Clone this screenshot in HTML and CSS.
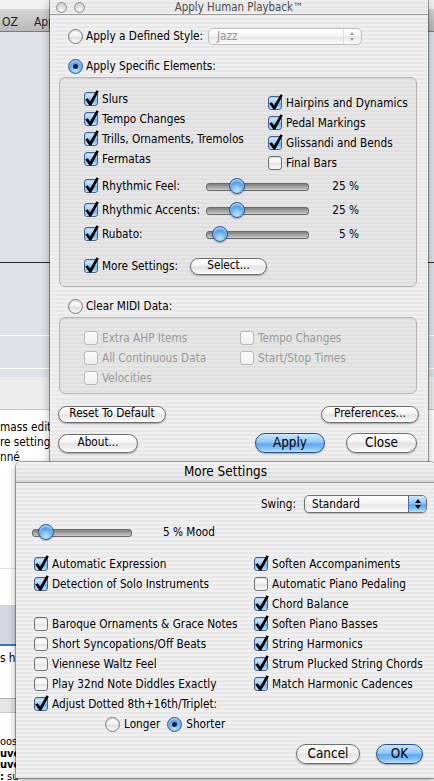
FILE: index.html
```html
<!DOCTYPE html>
<html lang="en">
<head>
<meta charset="utf-8">
<title>Apply Human Playback</title>
<link rel="stylesheet" href="styles.css">
</head>
<body>
<div class="desk">

  <!-- document window sitting behind the dialogs -->
  <div class="backwin">
    <div class="bw-cap"></div>
    <div class="bw-toolbar"><span class="tool-a">OZ</span><span>Apply</span></div>
    <div class="bw-pane p1"></div>
    <div class="bw-rule"></div>
    <div class="bw-pane p2"></div>
    <div class="bw-pane p3"></div>
    <div class="bw-pane p4"></div>
    <div class="bw-strip s1"></div>
    <div class="bw-doc d1">
      <p>mass editing</p>
      <p>re settings</p>
      <p>nné</p>
    </div>
    <div class="bw-doc d2"></div>
    <div class="bw-pane p5"></div>
    <div class="bw-doc d3"><p>s h</p></div>
    <div class="bw-strip s2"></div>
    <div class="bw-doc d4">
      <p>oost</p>
      <p><b>uve</b></p>
      <p><b>uve</b></p>
      <p><b>:</b> su</p>
    </div>
  </div>

  <!-- Apply Human Playback utility panel -->
  <section class="win hp">
    <header class="tb-util">
      <span class="lights"><i></i><i></i></span>
      <h1>Apply Human Playback™</h1>
      <span></span>
    </header>
    <div class="hp-body">
      <div class="line style-row">
        <label class="opt"><span class="rb"></span>Apply a Defined Style:</label>
        <div class="popup jazz"><span class="pop-text">Jazz</span><span class="pop-arrows"></span></div>
      </div>
      <div class="line radio-line mt10">
        <label class="opt"><span class="rb on"></span>Apply Specific Elements:</label>
      </div>

      <div class="group g-elems">
        <div class="cols">
          <div class="col">
            <div class="ck"><span class="cb on"></span>Slurs</div>
            <div class="ck"><span class="cb on"></span>Tempo Changes</div>
            <div class="ck"><span class="cb on"></span>Trills, Ornaments, Tremolos</div>
            <div class="ck"><span class="cb on"></span>Fermatas</div>
          </div>
          <div class="col col-r">
            <div class="ck"><span class="cb on"></span>Hairpins and Dynamics</div>
            <div class="ck"><span class="cb on"></span>Pedal Markings</div>
            <div class="ck"><span class="cb on"></span>Glissandi and Bends</div>
            <div class="ck"><span class="cb"></span>Final Bars</div>
          </div>
        </div>
        <div class="sliders">
          <div class="sl-row">
            <div class="ck"><span class="cb on"></span>Rhythmic Feel:</div>
            <div class="slider"><span class="knob" style="left:23px"></span></div>
            <div class="val">25 %</div>
          </div>
          <div class="sl-row">
            <div class="ck"><span class="cb on"></span>Rhythmic Accents:</div>
            <div class="slider"><span class="knob" style="left:23px"></span></div>
            <div class="val">25 %</div>
          </div>
          <div class="sl-row">
            <div class="ck"><span class="cb on"></span>Rubato:</div>
            <div class="slider"><span class="knob" style="left:6px"></span></div>
            <div class="val">5 %</div>
          </div>
        </div>
        <div class="more-row">
          <div class="ck"><span class="cb on"></span>More Settings:</div>
          <button class="btn w-select">Select...</button>
        </div>
      </div>

      <div class="line radio-line mt9">
        <label class="opt"><span class="rb"></span>Clear MIDI Data:</label>
      </div>

      <div class="group g-clear">
        <div class="clear-cols">
          <div class="col">
            <div class="ck dis"><span class="cb"></span>Extra AHP Items</div>
            <div class="ck dis"><span class="cb"></span>All Continuous Data</div>
            <div class="ck dis"><span class="cb"></span>Velocities</div>
          </div>
          <div class="col">
            <div class="ck dis"><span class="cb"></span>Tempo Changes</div>
            <div class="ck dis"><span class="cb"></span>Start/Stop Times</div>
          </div>
        </div>
      </div>

      <div class="btn-row r1">
        <button class="btn w-reset">Reset To Default</button>
        <button class="btn w-prefs">Preferences...</button>
      </div>
      <div class="btn-row r2">
        <button class="btn tall w-about">About...</button>
        <button class="btn big default w-apply">Apply</button>
        <button class="btn big w-close">Close</button>
      </div>
    </div>
  </section>

  <!-- More Settings dialog -->
  <section class="win ms">
    <header class="tb-main"><h1>More Settings</h1></header>
    <div class="ms-body">
      <div class="swing-row">
        <span>Swing:</span>
        <div class="popup swing"><span class="pop-text">Standard</span><span class="pop-arrows blue"></span></div>
      </div>
      <div class="mood-row">
        <div class="slider mood"><span class="knob" style="left:6px"></span></div>
        <span>5 % Mood</span>
      </div>
      <div class="ms-cols">
        <div class="col">
          <div class="ck"><span class="cb on"></span>Automatic Expression</div>
          <div class="ck"><span class="cb on"></span>Detection of Solo Instruments</div>
          <div class="ck blank"></div>
          <div class="ck"><span class="cb"></span>Baroque Ornaments &amp; Grace Notes</div>
          <div class="ck"><span class="cb"></span>Short Syncopations/Off Beats</div>
          <div class="ck"><span class="cb"></span>Viennese Waltz Feel</div>
          <div class="ck"><span class="cb"></span>Play 32nd Note Diddles Exactly</div>
          <div class="ck"><span class="cb on"></span>Adjust Dotted 8th+16th/Triplet:</div>
          <div class="dot-row">
            <label class="opt"><span class="rb"></span>Longer</label>
            <label class="opt"><span class="rb on"></span>Shorter</label>
          </div>
        </div>
        <div class="col">
          <div class="ck"><span class="cb on"></span>Soften Accompaniments</div>
          <div class="ck"><span class="cb"></span>Automatic Piano Pedaling</div>
          <div class="ck"><span class="cb on"></span>Chord Balance</div>
          <div class="ck"><span class="cb on"></span>Soften Piano Basses</div>
          <div class="ck"><span class="cb on"></span>String Harmonics</div>
          <div class="ck"><span class="cb on"></span>Strum Plucked String Chords</div>
          <div class="ck"><span class="cb on"></span>Match Harmonic Cadences</div>
        </div>
      </div>
      <div class="ms-btns">
        <button class="btn big w-cancel">Cancel</button>
        <button class="btn big default w-ok">OK</button>
      </div>
    </div>
  </section>

</div>
</body>
</html>
```

FILE: styles.css
```css
* { box-sizing: border-box; }

html, body { margin: 0; padding: 0; }

body {
  width: 434px;
  height: 781px;
  overflow: hidden;
  font-family: "DejaVu Sans Condensed", "DejaVu Sans", sans-serif;
  font-stretch: condensed;
  font-size: 11.7px;
  line-height: 14px;
  color: #000;
  background: #fff;
}

p { margin: 0; }

.desk {
  position: relative;
  width: 434px;
  height: 781px;
  overflow: hidden;
}

/* ---------- background document window ---------- */
.backwin {
  display: flex;
  flex-direction: column;
  height: 781px;
}
.backwin > div { flex: none; }

.bw-cap { height: 9px; background: #f2f2f2; }
.bw-toolbar {
  height: 23px;
  padding-top: 3px;
  display: flex;
  align-items: center;
  gap: 16px;
  font-size: 12px;
  color: #1e1e1e;
  background: linear-gradient(#d6d6d6, #b8b8b8);
  border-bottom: 1px solid #7b7b7b;
}
.tool-a { margin-left: 2px; }

.bw-pane { background: #dde2e7; }
.p1 { height: 230px; }
.bw-rule { height: 1px; background: #2b2b2b; }
.p2 { height: 73px; border-bottom: 1px solid #fff; }
.p3 { height: 33px; border-bottom: 1px solid #fff; }
.p4 { height: 8px; }
.bw-strip { background: #ebebeb; }
.s1 { height: 33px; border-bottom: 1px solid #c4c4c4; }
.bw-doc { background: #fff; }
.d1 { height: 159px; padding-top: 10px; line-height: 15px; border-bottom: 1px solid #e2e2e2; }
.d2 { height: 36px; }
.p5 { height: 41px; background: #d3d9df; border-bottom: 2px solid #3f73c0; }
.d3 { height: 53px; padding-top: 5px; border-bottom: 1px solid #b1b1b1; }
.s2 { height: 14px; background: #e6e6e6; border-bottom: 1px solid #c8c8c8; }
.backwin > .d4 { flex: 1; padding-top: 23px; font-size: 11px; line-height: 11.5px; }

/* ---------- windows ---------- */
.win {
  position: absolute;
  background: repeating-linear-gradient(180deg, #efefef 0 2px, #e8e8e8 2px 4px);
  box-shadow: 0 0 0 1px rgba(0, 0, 0, .32), 0 3px 9px rgba(0, 0, 0, .35);
}

.hp { left: 50px; top: 0; width: 378px; height: 462px; }
.ms { left: 16px; top: 462px; width: 419px; height: 316px; border-radius: 5px 5px 0 0; }

/* small utility title bar */
.tb-util {
  height: 15px;
  display: grid;
  grid-template-columns: 1fr auto 1fr;
  align-items: center;
  border-bottom: 1px solid #9d9d9d;
  background: repeating-linear-gradient(180deg, #ededed 0 2px, #e5e5e5 2px 4px);
}
.tb-util h1 {
  margin: 0;
  font-size: 11.4px;
  font-weight: normal;
  line-height: 14px;
  color: #4b4b4b;
}
.lights { display: flex; gap: 7px; padding-left: 6px; }
.lights i {
  width: 11px;
  height: 11px;
  border-radius: 50%;
  border: 1px solid #8f8f8f;
  background: radial-gradient(circle at 50% 75%, #fafafa 0, #dedede 45%, #c4c4c4 100%);
}

/* regular title bar */
.tb-main {
  height: 21px;
  display: flex;
  align-items: center;
  justify-content: center;
  border-radius: 5px 5px 0 0;
  border-bottom: 1px solid #999;
  background:
    repeating-linear-gradient(180deg, rgba(255,255,255,.35) 0 2px, rgba(255,255,255,0) 2px 4px),
    linear-gradient(#ececec, #d8d8d8);
}
.tb-main h1 {
  margin: 0;
  font-size: 13.4px;
  font-weight: normal;
  line-height: 16px;
}

/* ---------- controls ---------- */
.line { display: flex; align-items: center; height: 20px; }
.mt10 { margin-top: 10px; }
.mt9 { margin-top: 9px; }

.opt { display: flex; align-items: center; gap: 3px; white-space: nowrap; }

.rb {
  position: relative;
  flex: none;
  width: 15px;
  height: 15px;
  border-radius: 50%;
  border: 1px solid #7c7c7c;
  background: linear-gradient(#ffffff 0%, #f1f1f1 45%, #dedede 55%, #f9f9f9 100%);
  box-shadow: inset 0 1px 1px rgba(0, 0, 0, .18);
}
.rb.on {
  border-color: #3c5a88;
  background: radial-gradient(circle at 50% 80%, #b9e4ff 0, #69b0f1 45%, #3f8ce3 70%, #8cc6f5 100%);
  box-shadow: inset 0 2px 2px rgba(255, 255, 255, .55);
}
.rb.on::after {
  content: "";
  position: absolute;
  left: 4px;
  top: 4px;
  width: 5px;
  height: 5px;
  border-radius: 50%;
  background: #13233a;
}

.ck {
  display: flex;
  align-items: center;
  gap: 4px;
  height: 20px;
  white-space: nowrap;
}
.ck.dis { color: #9a9a9a; }

.cb {
  position: relative;
  flex: none;
  width: 14px;
  height: 14px;
  border: 1px solid #727272;
  border-radius: 3px;
  background: linear-gradient(#ffffff 0%, #f3f3f3 45%, #e2e2e2 55%, #fbfbfb 100%);
  box-shadow: inset 0 1px 1px rgba(0, 0, 0, .15);
}
.ck.dis .cb {
  border-color: #b9b9b9;
  background: linear-gradient(#fbfbfb, #efefef);
  box-shadow: none;
}
.cb.on {
  border-color: #45628c;
  background: linear-gradient(#d3ecfe 0%, #a2d0f7 45%, #6db4f1 55%, #b4e2ff 100%);
}
/* the check glyph rises above the box */
.cb.on::after {
  content: "";
  position: absolute;
  left: -1px;
  top: -3px;
  width: 16px;
  height: 17px;
  background: #000;
  clip-path: polygon(1.4px 9.6px, 3.6px 8.3px, 6.1px 11.6px, 12.6px 0.3px, 14.8px 1.4px, 7.3px 15.4px, 5.4px 15.4px);
}

.slider { position: relative; height: 16px; }
.slider::before {
  content: "";
  position: absolute;
  left: 0;
  right: 0;
  top: 5px;
  height: 6px;
  border-radius: 3px;
  border: 1px solid #6c6c6c;
  background: linear-gradient(#7e7e7e, #c9c9c9);
}
.knob {
  position: absolute;
  top: 0;
  width: 16px;
  height: 16px;
  border-radius: 50%;
  border: 1px solid #33598f;
  background: radial-gradient(circle at 50% 80%, #c2e8ff 0, #74b8f3 40%, #3c8ae2 70%, #7fbff4 100%);
  box-shadow: inset 0 2px 2px rgba(255, 255, 255, .6), 0 1px 1px rgba(0, 0, 0, .25);
}

.btn {
  display: flex;
  align-items: center;
  justify-content: center;
  flex: none;
  padding: 0;
  height: 17px;
  font-family: inherit;
  font-stretch: condensed;
  font-size: 11.7px;
  line-height: 1;
  color: #000;
  border: 1px solid #6e6e6e;
  border-radius: 9px;
  background: linear-gradient(#ffffff 0%, #f5f5f5 40%, #e3e3e3 52%, #eeeeee 78%, #ffffff 100%);
  box-shadow: 0 1px 1.5px rgba(0, 0, 0, .3);
}
.btn.tall { height: 19px; border-radius: 10px; }
.btn.big { height: 20px; border-radius: 10px; font-size: 13.4px; }
.btn.default {
  border-color: #2b4e88;
  background: linear-gradient(#cde7fe 0%, #92c8f7 45%, #5ea7ef 55%, #80c1f8 80%, #b9e5ff 100%);
}

.w-select { width: 77px; }
.w-reset { width: 108px; }
.w-prefs { width: 98px; }
.w-about { width: 80px; }
.w-apply { width: 70px; }
.w-close { width: 71px; }
.w-cancel { width: 64px; }
.w-ok { width: 47px; }

.popup {
  display: flex;
  align-items: center;
  height: 18px;
  border: 1px solid #6f6f6f;
  border-radius: 5px;
  background: linear-gradient(#ffffff 0%, #f5f5f5 45%, #e7e7e7 55%, #fbfbfb 100%);
  box-shadow: 0 1px 1px rgba(0, 0, 0, .2);
}
.pop-text { flex: 1; white-space: nowrap; }
.pop-arrows {
  position: relative;
  width: 18px;
  align-self: stretch;
  border-radius: 0 4px 4px 0;
}
.pop-arrows::before,
.pop-arrows::after {
  content: "";
  position: absolute;
  left: 50%;
  margin-left: -3px;
  border-left: 3px solid transparent;
  border-right: 3px solid transparent;
}
.pop-arrows::before { top: 3px; border-bottom: 4px solid #000; }
.pop-arrows::after { bottom: 3px; border-top: 4px solid #000; }
.pop-arrows.blue {
  border-left: 1px solid #4a6c9d;
  background: linear-gradient(#cde7fe 0%, #92c8f7 45%, #5ea7ef 55%, #80c1f8 80%, #b9e5ff 100%);
}

/* ---------- Apply Human Playback layout ---------- */
.hp-body { padding: 11px 0 0 8px; }

.style-row {
  display: grid;
  grid-template-columns: 140px 154px;
  margin-left: 10px;
}
.radio-line { margin-left: 10px; }

.popup.jazz {
  height: 17px;
  color: #939393;
  border-color: #bdbdbd;
  box-shadow: none;
}
.jazz .pop-text { padding-left: 8px; }
.jazz .pop-arrows { border-left: 1px solid #dedede; }
.jazz .pop-arrows::before { border-bottom-color: #a0a0a0; border-width: 0 2.5px 3.5px; margin-left: -2.5px; top: 3px; }
.jazz .pop-arrows::after { border-top-color: #a0a0a0; border-width: 3.5px 2.5px 0; margin-left: -2.5px; bottom: 3px; }

.group {
  margin-left: 1px;
  width: 358px;
  border: 1px solid #b4b4b4;
  border-radius: 6px;
  background: rgba(0, 0, 0, .035);
  box-shadow: inset 0 1px 1px rgba(0, 0, 0, .05);
}
.g-elems { height: 210px; margin-top: 1px; padding: 11px 0 0 24px; }
.g-clear { height: 77px; margin-top: 1px; padding: 10px 0 0 24px; }

.cols { display: grid; grid-template-columns: 184px 1fr; }
.col-r { padding-top: 4px; }

.sliders { margin-top: 1px; }
.sl-row {
  display: grid;
  grid-template-columns: 122px 103px 50px;
  align-items: center;
  height: 24px;
}
.val { text-align: right; white-space: nowrap; }

.more-row {
  display: grid;
  grid-template-columns: 106px 77px;
  align-items: center;
  height: 24px;
  margin-top: 8px;
}

.clear-cols { display: grid; grid-template-columns: 156px 1fr; }

.btn-row { display: flex; align-items: center; }
.r1 { height: 18px; margin-top: 11px; margin-right: 9px; justify-content: space-between; }
.r2 { height: 20px; margin-top: 10px; margin-right: 11px; }
.r2 .w-apply { margin-left: auto; }
.r2 .w-close { margin-left: 21px; }

/* ---------- More Settings layout ---------- */
.ms-body { padding: 12px 0 0 18px; }

.swing-row {
  display: flex;
  align-items: center;
  justify-content: flex-end;
  gap: 8px;
  height: 18px;
  margin-right: 8px;
}
.popup.swing { width: 123px; }
.swing .pop-text { padding-left: 7px; }

.mood-row {
  display: flex;
  align-items: center;
  gap: 31px;
  height: 18px;
  margin-top: 10px;
  margin-left: -2px;
}
.slider.mood { width: 100px; }

.ms-cols { display: grid; grid-template-columns: 220px 1fr; margin-top: 13px; }

.dot-row {
  display: flex;
  align-items: center;
  height: 20px;
  padding-left: 71px;
  gap: 7px;
}
.dot-row .opt { gap: 4px; }

.ms-btns {
  display: flex;
  justify-content: flex-end;
  gap: 16px;
  height: 20px;
  margin-top: 10px;
  margin-right: 12px;
}
```
